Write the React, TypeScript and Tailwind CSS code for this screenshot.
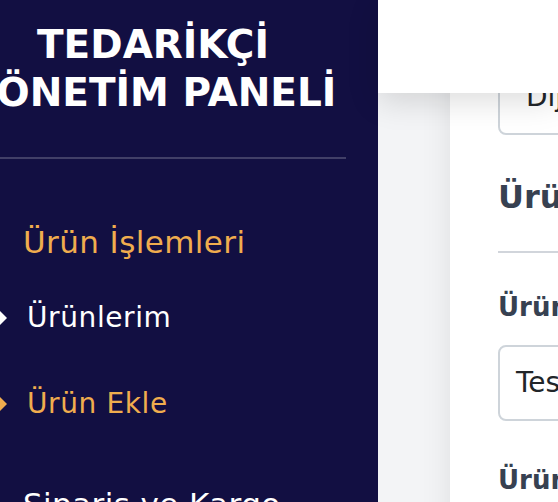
import React from 'react';

const font = { fontFamily: '"DejaVu Sans", "Noto Sans", sans-serif' };

function Diamond({ className }: { className: string }) {
  return (
    <svg viewBox="0 0 18 18" className={`-ml-[34px] mr-[20px] h-[18px] w-[18px] shrink-0 ${className}`}>
      <polygon points="9,0 18,9 9,18 0,9" fill="currentColor" />
    </svg>
  );
}

function Sidebar() {
  return (
    <aside className="w-[450px] shrink-0 bg-[#120f42] pt-[21px]">
      <h1 className="text-center text-[39px] font-bold leading-[48px] text-white">
        TEDARİKÇİ
        <br />
        YÖNETİM PANELİ
      </h1>
      <hr className="mx-8 mt-[40px] border-t-2 border-white/20" />
      <nav className="pl-[95px] text-[28px] leading-[34px] tracking-[0.6px]">
        <div className="mt-[66px] text-[31px] tracking-[0.4px] text-[#f0ad4e]">Ürün İşlemleri</div>
        <a href="#" className="mt-[42px] flex items-center text-white">
          <Diamond className="text-white" />
          Ürünlerim
        </a>
        <a href="#" className="mt-[52px] flex items-center text-[#f0ad4e]">
          <Diamond className="text-[#f0ad4e]" />
          Ürün Ekle
        </a>
        <div className="mt-[66px] text-[31px] tracking-[0.4px] text-white">Sipariş ve Kargo</div>
      </nav>
    </aside>
  );
}

function Main() {
  return (
    <main className="flex min-w-0 flex-1 flex-col bg-[#f3f4f6]">
      <header className="relative z-10 h-[93px] shrink-0 bg-white shadow-[0_8px_30px_rgba(0,0,0,0.14)]" />
      <div className="flex-1 overflow-hidden pl-[72px]">
        <section className="-mt-[34px] h-[600px] bg-white pl-[48px] shadow-[0_0_30px_rgba(0,0,0,0.09)]">
          <div className="flex h-[76px] w-[500px] items-center rounded-lg border-2 border-[#ced4da] pl-[26px] text-[28px] text-[#212529]">
            Dijital Ürün
          </div>
          <h2 className="mt-[42px] whitespace-nowrap text-[32px] font-extrabold leading-[40px] text-[#374151]">
            Ürün Bilgileri
          </h2>
          <hr className="mt-[34px] border-t-2 border-[#d1d5db]" />
          <label className="mt-[38px] block whitespace-nowrap text-[26px] font-semibold leading-[32px] text-[#374151]">
            Ürün Adı
          </label>
          <div className="mt-[22px] flex h-[76px] w-[500px] items-center rounded-lg border-2 border-[#ced4da] pl-[16px] text-[28px] text-[#212529]">
            Test Ürünü
          </div>
          <label className="mt-[43px] block whitespace-nowrap text-[26px] font-semibold leading-[32px] text-[#374151]">
            Ürün Açıklaması
          </label>
        </section>
      </div>
    </main>
  );
}

export default function App() {
  return (
    <div className="h-[502px] w-[558px] overflow-hidden" style={font}>
      <div className="-ml-[72px] flex h-[502px] w-[630px]">
        <Sidebar />
        <Main />
      </div>
    </div>
  );
}
